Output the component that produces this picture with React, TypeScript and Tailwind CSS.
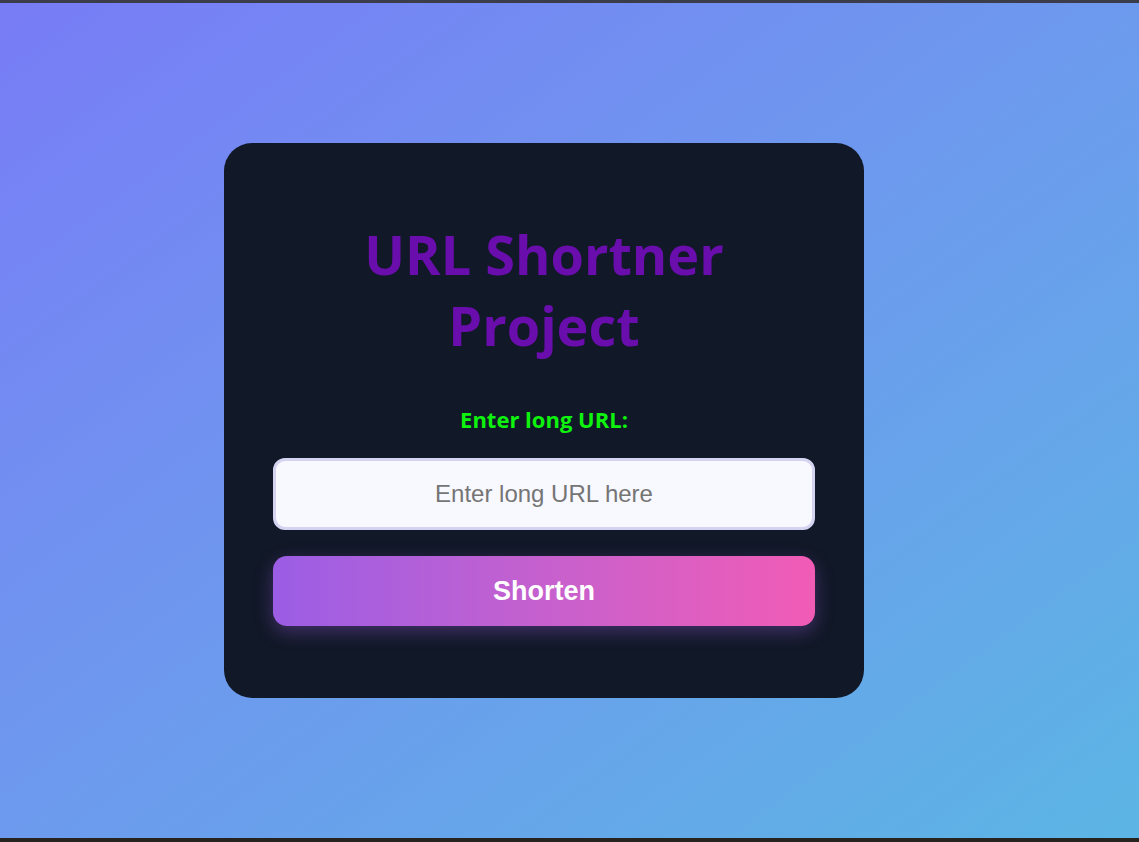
const App = () => {
  return (
    <div className="h-[842px] w-full flex flex-col bg-[#2b2a2c] overflow-hidden">
      <div className="h-[3px] bg-[#3b3d4b]"></div>
      <div className="flex-1 flex items-center bg-linear-to-br from-[#787cf6] to-[#5bb5e4] pl-[224px]">
        <div className="w-[640px] h-[555px] rounded-[28px] bg-[#111827] px-[49px] pt-[76px] flex flex-col items-center">
          <h1 className="text-center text-[#6a0dad] font-bold text-[54px] leading-[71px] font-['Open_Sans',sans-serif] w-[420px]">
            URL Shortner Project
          </h1>
          <label className="mt-[42px] text-[#0ef20e] font-bold text-[22px] font-['Open_Sans',sans-serif]">
            Enter long URL:
          </label>
          <input
            type="text"
            placeholder="Enter long URL here"
            className="mt-[22px] w-full h-[72px] rounded-[12px] border-[3px] border-[#d4d4f2] bg-[#f8f8ff] text-center text-[24px] font-['Liberation_Sans',Arial,sans-serif] placeholder:text-[#757575] outline-none"
          />
          <button className="mt-[26px] w-full h-[70px] rounded-[14px] bg-linear-to-r from-[#9b5de5] to-[#f15bb5] text-white font-bold text-[27px] font-['Liberation_Sans',Arial,sans-serif] shadow-[0_6px_18px_rgba(155,93,229,0.35)]">
            Shorten
          </button>
        </div>
      </div>
      <div className="h-[4px] bg-[#27231f]"></div>
    </div>
  );
};

export default App;
